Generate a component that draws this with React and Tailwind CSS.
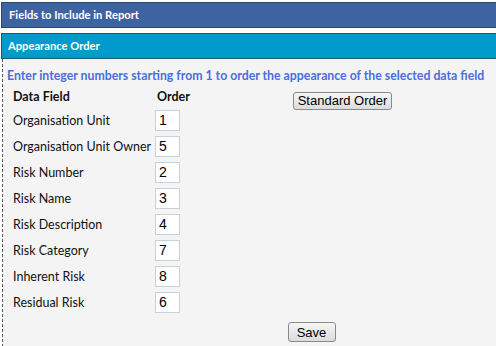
import React from "react";

const rows = [
  ["Organisation Unit", "1"],
  ["Organisation Unit Owner", "5"],
  ["Risk Number", "2"],
  ["Risk Name", "3"],
  ["Risk Description", "4"],
  ["Risk Category", "7"],
  ["Inherent Risk", "8"],
  ["Residual Risk", "6"],
];

const font = { fontFamily: "Lato, 'Open Sans', sans-serif" };
const arial = { fontFamily: "'Liberation Sans', Arial, sans-serif" };

export default function App() {
  return (
    <div className="w-[496px] h-[346px] bg-white overflow-hidden pt-[2px]" style={font}>
      {/* Section header */}
      <div className="ml-[1px] h-[26px] bg-[#3e63a1] border-y border-l border-[#2a4a6c] flex items-center pl-[7px] text-white text-[11.2px] font-bold">
        Fields to Include in Report
      </div>

      <div className="mt-[5px] ml-[1px] h-[26px] bg-[#009bcb] border-y border-l border-[#1d5d73] flex items-center pl-[6px] text-white text-[11.2px] font-bold">
        Appearance Order
      </div>

      {/* Body */}
      <div className="ml-[2px] h-[288px] bg-[#f4f4f4] border-l border-dashed border-[#555]">
        <p className="pt-[8px] pl-[4px] text-[12.3px] font-bold text-[#4a6ee0] whitespace-nowrap">
          Enter integer numbers starting from 1 to order the appearance of the selected data field
        </p>

        <div className="flex">
          <div className="w-[290px] pl-[10px]">
            <div className="flex h-[22px] items-end pb-[1px] text-[12.5px] font-bold text-[#111]">
              <span className="w-[144px]">Data Field</span>
              <span>Order</span>
            </div>
            {rows.map(([label, value]) => (
              <div key={label} className="flex items-center h-[26px] text-[12.5px] text-[#111]">
                <span className="w-[142px] whitespace-nowrap pt-[1px]">{label}</span>
                <input
                  readOnly
                  value={value}
                  className="w-[25px] h-[21px] bg-white border border-[#c8d0d8] px-[3px] text-[14px] text-black outline-none"
                  style={arial}
                />
              </div>
            ))}
          </div>
          <div className="pt-[2px]">
            <button
              className="w-[99px] h-[18px] rounded-[3px] border border-[#8a8a8a] bg-gradient-to-b from-[#f6f6f6] to-[#dcdcdc] text-[13px] leading-none text-black"
              style={arial}
            >
              Standard Order
            </button>
          </div>
        </div>

        <div className="flex justify-center pl-[124px] mt-[7px]">
          <button
            className="w-[48px] h-[20px] rounded-[3px] border border-[#8a8a8a] bg-gradient-to-b from-[#f6f6f6] to-[#dcdcdc] text-[13px] leading-none text-black"
            style={arial}
          >
            Save
          </button>
        </div>
      </div>
    </div>
  );
}
